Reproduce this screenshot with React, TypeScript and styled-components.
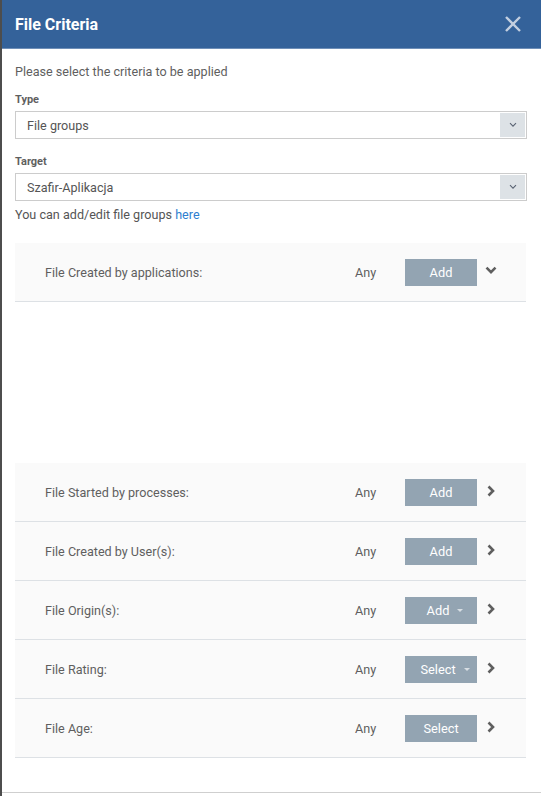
import React from "react";
import styled, { createGlobalStyle } from "styled-components";

const GlobalStyle = createGlobalStyle`
  html, body {
    margin: 0;
    padding: 0;
    background: #4d4d4d;
  }
  body {
    font-family: Roboto, "Liberation Sans", Arial, sans-serif;
  }
`;

const Modal = styled.div`
  margin-left: 2px;
  height: 796px;
  background: #ffffff;
  display: flex;
  flex-direction: column;
  overflow: hidden;
`;

const Header = styled.div`
  height: 48px;
  background: #34629a;
  border-bottom: 1px solid #6f8fb8;
  display: flex;
  align-items: center;
  justify-content: space-between;
  padding: 0 19px 0 13px;
  flex-shrink: 0;
`;

const Title = styled.h1`
  margin: 0;
  font-size: 16px;
  font-weight: 700;
  color: #ffffff;
`;

const CloseButton = styled.button`
  border: 0;
  background: none;
  padding: 0;
  width: 18px;
  height: 18px;
  display: flex;
  cursor: pointer;
`;

const Body = styled.div`
  padding: 15px 14px 0 13px;
  flex: 1;
`;

const Intro = styled.p`
  margin: 0;
  font-size: 12.6px;
  line-height: 16px;
  color: #5f5f5f;
`;

const Label = styled.div<{ $top: number }>`
  margin-top: ${(p) => p.$top}px;
  font-size: 11px;
  font-weight: 700;
  line-height: 14px;
  color: #5f5f5f;
`;

const SelectBox = styled.div`
  margin-top: 4px;
  height: 28px;
  box-sizing: border-box;
  border: 1px solid #cccccc;
  display: flex;
  align-items: stretch;
`;

const SelectValue = styled.div`
  flex: 1;
  display: flex;
  align-items: center;
  padding-left: 11px;
  font-size: 12.6px;
  color: #555555;
`;

const SelectToggle = styled.div`
  width: 25px;
  margin: 1px;
  background: #dde2e6;
  display: flex;
  align-items: center;
  justify-content: center;
`;

const Helper = styled.p`
  margin: 6px 0 0;
  font-size: 12.6px;
  line-height: 16px;
  color: #555555;

  a {
    color: #2f7fcf;
    text-decoration: none;
  }
`;

const CriteriaList = styled.div`
  margin-top: 20px;
  margin-right: 1px;
`;

const Row = styled.div`
  height: 58px;
  background: #fafafa;
  border-bottom: 1px solid #dde1e5;
  display: grid;
  grid-template-columns: 1fr 50px 72px 49px;
  align-items: center;
  padding-left: 30px;
  font-size: 12.6px;
  color: #5f5f5f;
`;

const Expanded = styled.div`
  height: 161px;
`;

const Any = styled.span`
  color: #5f5f5f;
`;

const ActionButton = styled.button`
  height: 27px;
  border: 0;
  padding: 0;
  background: #93a4b2;
  color: #ffffff;
  font-family: inherit;
  font-size: 12.8px;
  font-weight: 400;
  display: flex;
  align-items: center;
  justify-content: center;
  gap: 8px;
  cursor: pointer;
`;

const Caret = styled.span`
  width: 0;
  height: 0;
  border-left: 3px solid transparent;
  border-right: 3px solid transparent;
  border-top: 3px solid #d8dee3;
  margin-top: 1px;
`;

const Toggle = styled.span<{ $down?: boolean }>`
  display: flex;
  align-items: center;
  padding-left: ${(p) => (p.$down ? 8 : 10)}px;
  margin-top: -3px;
`;

const Footer = styled.div`
  height: 3px;
  border-top: 1px solid #cfcfcf;
  flex-shrink: 0;
`;

function ChevronDown({ size = 12, color = "#5f5f5f", stroke = 2.6 }) {
  return (
    <svg width={size} height={size * 0.7} viewBox="0 0 12 8">
      <path d="M1.5 1.5 L6 6 L10.5 1.5" fill="none" stroke={color} strokeWidth={stroke} />
    </svg>
  );
}

function ChevronRight() {
  return (
    <svg width="8" height="12" viewBox="0 0 8 12">
      <path d="M1.5 1.5 L6 6 L1.5 10.5" fill="none" stroke="#5f5f5f" strokeWidth="2.6" />
    </svg>
  );
}

type Criterion = {
  label: string;
  action: string;
  menu?: boolean;
  open?: boolean;
};

const criteria: Criterion[] = [
  { label: "File Created by applications:", action: "Add", open: true },
  { label: "File Started by processes:", action: "Add" },
  { label: "File Created by User(s):", action: "Add" },
  { label: "File Origin(s):", action: "Add", menu: true },
  { label: "File Rating:", action: "Select", menu: true },
  { label: "File Age:", action: "Select" },
];

export default function App() {
  return (
    <>
      <GlobalStyle />
      <Modal>
        <Header>
          <Title>File Criteria</Title>
          <CloseButton aria-label="Close">
            <svg width="18" height="18" viewBox="0 0 18 18">
              <path d="M2 2 L16 16 M16 2 L2 16" stroke="#c3cfe0" strokeWidth="2.4" />
            </svg>
          </CloseButton>
        </Header>
        <Body>
          <Intro>Please select the criteria to be applied</Intro>
          <Label $top={13}>Type</Label>
          <SelectBox>
            <SelectValue>File groups</SelectValue>
            <SelectToggle>
              <ChevronDown size={8} color="#5a6373" stroke={1.6} />
            </SelectToggle>
          </SelectBox>
          <Label $top={16}>Target</Label>
          <SelectBox>
            <SelectValue>Szafir-Aplikacja</SelectValue>
            <SelectToggle>
              <ChevronDown size={8} color="#5a6373" stroke={1.6} />
            </SelectToggle>
          </SelectBox>
          <Helper>
            You can add/edit file groups <a href="#">here</a>
          </Helper>
          <CriteriaList>
            {criteria.map((c) => (
              <React.Fragment key={c.label}>
                <Row>
                  <span>{c.label}</span>
                  <Any>Any</Any>
                  <ActionButton style={c.menu ? { paddingLeft: 8 } : undefined}>
                    {c.action}
                    {c.menu && <Caret />}
                  </ActionButton>
                  <Toggle $down={c.open}>
                    {c.open ? <ChevronDown /> : <ChevronRight />}
                  </Toggle>
                </Row>
                {c.open && <Expanded />}
              </React.Fragment>
            ))}
          </CriteriaList>
        </Body>
        <Footer />
      </Modal>
    </>
  );
}
